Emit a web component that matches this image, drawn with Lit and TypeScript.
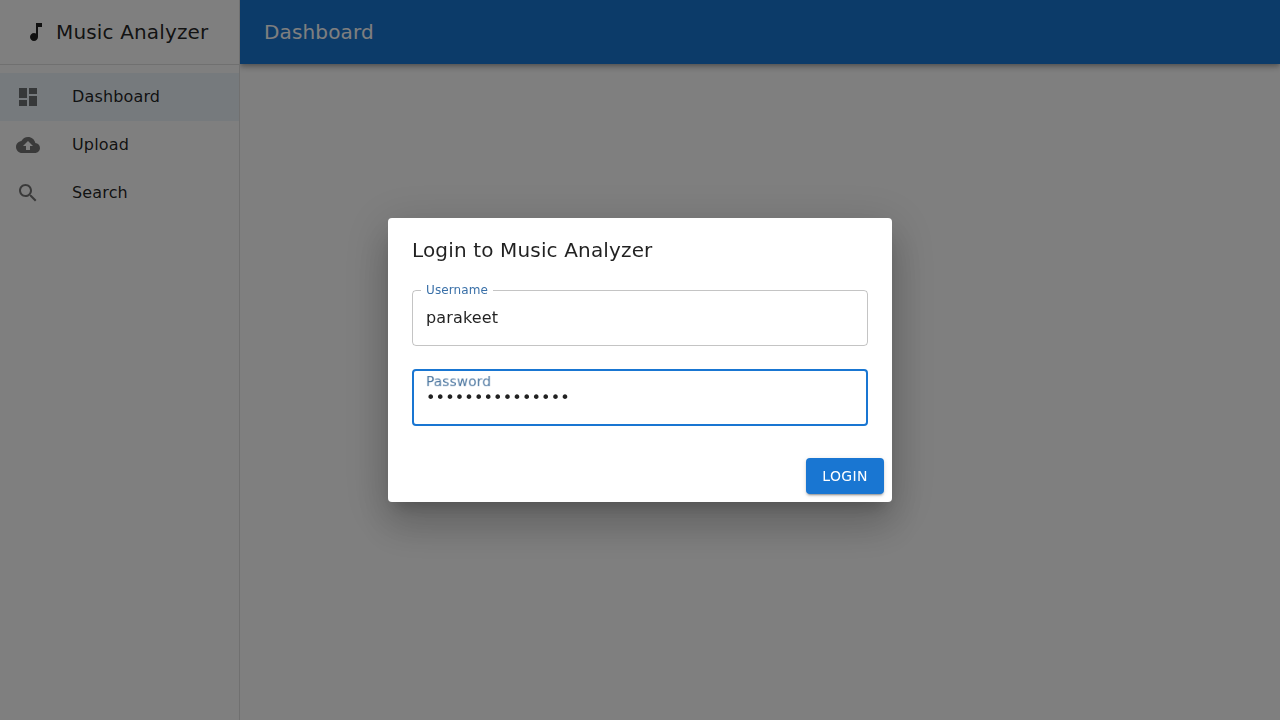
import { LitElement, html, css, svg } from "lit";
import { customElement, property } from "lit/decorators.js";
import { classMap } from "lit/directives/class-map.js";

const ICONS = {
  note: "M12 3v10.55c-.59-.34-1.27-.55-2-.55-2.21 0-4 1.79-4 4s1.79 4 4 4 4-1.79 4-4V7h4V3h-6z",
  dashboard: "M3 13h8V3H3v10zm0 8h8v-6H3v6zm10 0h8V11h-8v10zm0-18v6h8V3h-8z",
  upload:
    "M19.35 10.04C18.67 6.59 15.64 4 12 4 9.11 4 6.6 5.64 5.35 8.04 2.34 8.36 0 10.91 0 14c0 3.31 2.69 6 6 6h13c2.76 0 5-2.24 5-5 0-2.64-2.05-4.78-4.65-4.96zM14 13v4h-4v-4H7l5-5 5 5h-3z",
  search:
    "M15.5 14h-.79l-.28-.27C15.41 12.59 16 11.11 16 9.5 16 5.91 13.09 3 9.5 3S3 5.91 3 9.5 5.91 16 9.5 16c1.61 0 3.09-.59 4.23-1.57l.27.28v.79l5 4.99L20.49 19l-4.99-5zm-6 0C7.01 14 5 11.99 5 9.5S7.01 5 9.5 5 14 7.01 14 9.5 11.99 14 9.5 14z",
};

const icon = (name: keyof typeof ICONS) =>
  html`<svg class="icon" viewBox="0 0 24 24" aria-hidden="true">${svg`<path d=${ICONS[name]}></path>`}</svg>`;

const NAV: { label: string; icon: keyof typeof ICONS }[] = [
  { label: "Dashboard", icon: "dashboard" },
  { label: "Upload", icon: "upload" },
  { label: "Search", icon: "search" },
];

@customElement("outlined-field")
export class OutlinedField extends LitElement {
  @property() label = "";
  @property() value = "";
  @property() type = "text";
  @property({ type: Boolean }) active = false;

  static styles = css`
    :host {
      display: block;
    }
    .field {
      position: relative;
      display: flex;
      border-radius: 4px;
      font-size: 16px;
      letter-spacing: 0.00938em;
      color: rgba(0, 0, 0, 0.87);
    }
    input {
      font: inherit;
      letter-spacing: inherit;
      color: inherit;
      border: 0;
      outline: 0;
      margin: 0;
      background: none;
      box-sizing: content-box;
      width: 100%;
      min-width: 0;
      height: 23px;
      padding: 16.5px 14px;
      caret-color: transparent;
    }
    label {
      position: absolute;
      top: 0;
      left: 0;
      z-index: 1;
      line-height: 23px;
      white-space: nowrap;
      transform-origin: top left;
      transform: translate(14px, -9px) scale(0.75);
      color: #3a70a8;
      pointer-events: none;
    }
    .active label {
      transform: translate(14px, 1.6px) scale(0.856);
      color: #4a759f;
      will-change: transform;
    }
    fieldset {
      position: absolute;
      inset: -5px 0 0 0;
      margin: 0;
      padding: 0 8px;
      min-width: 0;
      border: 1px solid rgba(0, 0, 0, 0.23);
      border-radius: 4px;
      overflow: hidden;
      pointer-events: none;
    }
    .active fieldset {
      border: 2px solid #1976d2;
    }
    legend {
      display: block;
      padding: 0;
      height: 11px;
      font-size: 12px;
      max-width: 100%;
      overflow: hidden;
      visibility: hidden;
      white-space: nowrap;
    }
    .active legend {
      max-width: 0.01px;
    }
    legend span {
      display: inline-block;
      padding: 0 5px;
    }
  `;

  render() {
    return html`<div class=${classMap({ field: true, active: this.active })}>
      <label for="input">${this.label}</label>
      <input id="input" type=${this.type} .value=${this.value} autocomplete="off" spellcheck="false" />
      <fieldset aria-hidden="true"><legend><span>${this.label}</span></legend></fieldset>
    </div>`;
  }
}

@customElement("app-root")
export class AppRoot extends LitElement {
  static styles = css`
    :host {
      display: block;
      height: 100vh;
      overflow: hidden;
      font-family: "DejaVu Sans", sans-serif;
      font-size: 16px;
      line-height: 1.5;
      letter-spacing: 0.00938em;
      color: rgba(0, 0, 0, 0.87);
      background: #fff;
    }
    .shell {
      display: flex;
      height: 100%;
    }
    .drawer {
      width: 240px;
      flex: none;
      box-sizing: border-box;
      border-right: 1px solid rgba(0, 0, 0, 0.12);
      background: #fff;
      z-index: 1;
    }
    .icon {
      width: 24px;
      height: 24px;
      flex: none;
      fill: currentColor;
      display: block;
    }
    .title {
      font-size: 20px;
      line-height: 1.6;
      letter-spacing: 0.0075em;
      font-weight: 400;
      margin: 0;
      white-space: nowrap;
    }
    .brand {
      display: flex;
      align-items: center;
      gap: 8px;
      height: 64px;
      padding: 0 24px;
      border-bottom: 1px solid rgba(0, 0, 0, 0.12);
    }
    .nav {
      list-style: none;
      margin: 0;
      padding: 8px 0;
    }
    .item {
      display: flex;
      align-items: center;
      gap: 32px;
      height: 48px;
      padding: 0 16px;
    }
    .item .icon {
      color: rgba(0, 0, 0, 0.54);
    }
    .selected {
      background: rgba(25, 118, 210, 0.08);
    }
    .main {
      flex: 1;
    }
    .bar {
      display: flex;
      align-items: center;
      height: 64px;
      padding: 0 24px;
      color: #fff;
      background: #1976d2;
      box-shadow: 0 2px 4px -1px rgba(0, 0, 0, 0.2), 0 4px 5px 0 rgba(0, 0, 0, 0.14),
        0 1px 10px 0 rgba(0, 0, 0, 0.12);
    }
    .backdrop {
      position: fixed;
      inset: 0;
      z-index: 10;
      display: flex;
      align-items: center;
      justify-content: center;
      background: rgba(0, 0, 0, 0.5);
    }
    .dialog {
      width: 504px;
      border-radius: 4px;
      background: #fff;
      box-shadow: 0 11px 15px -7px rgba(0, 0, 0, 0.2), 0 24px 38px 3px rgba(0, 0, 0, 0.14),
        0 9px 46px 8px rgba(0, 0, 0, 0.12);
    }
    .dialog .title {
      padding: 16px 24px;
    }
    .content {
      display: flex;
      flex-direction: column;
      gap: 24px;
      padding: 8px 24px 24px;
    }
    .actions {
      display: flex;
      justify-content: flex-end;
      padding: 8px;
    }
    .login {
      font: inherit;
      font-size: 14px;
      line-height: 1.75;
      letter-spacing: 0.02857em;
      text-transform: uppercase;
      color: #fff;
      background: #1976d2;
      border: 0;
      border-radius: 4px;
      min-width: 64px;
      padding: 6px 16px;
      box-shadow: 0 3px 1px -2px rgba(0, 0, 0, 0.2), 0 2px 2px 0 rgba(0, 0, 0, 0.14),
        0 1px 5px 0 rgba(0, 0, 0, 0.12);
    }
  `;

  render() {
    return html`
      <div class="shell">
        <aside class="drawer">
          <div class="brand">${icon("note")}<div class="title">Music Analyzer</div></div>
          <ul class="nav">
            ${NAV.map(
              (n, i) => html`<li class=${classMap({ item: true, selected: i === 0 })}>
                ${icon(n.icon)}<span>${n.label}</span>
              </li>`
            )}
          </ul>
        </aside>
        <main class="main">
          <header class="bar"><div class="title">Dashboard</div></header>
        </main>
      </div>
      <div class="backdrop">
        <div class="dialog" role="dialog">
          <h2 class="title">Login to Music Analyzer</h2>
          <div class="content">
            <outlined-field label="Username" value="parakeet"></outlined-field>
            <outlined-field label="Password" type="password" value="musicanalyzer12" active></outlined-field>
          </div>
          <div class="actions"><button class="login">Login</button></div>
        </div>
      </div>
    `;
  }
}
